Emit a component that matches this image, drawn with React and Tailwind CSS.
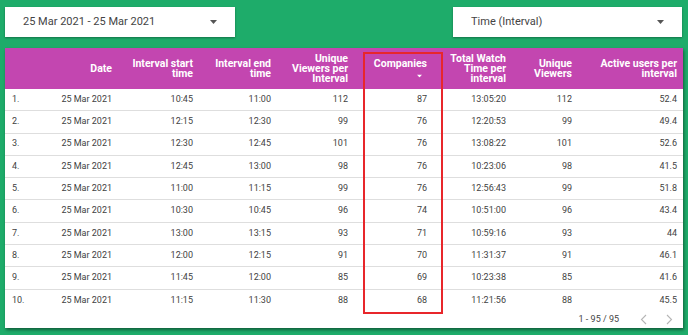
import React from 'react';

const rows = [
    ['1.', '25 Mar 2021', '10:45', '11:00', '112', '87', '13:05:20', '112', '52.4'],
    ['2.', '25 Mar 2021', '12:15', '12:30', '99', '76', '12:20:53', '99', '49.4'],
    ['3.', '25 Mar 2021', '12:30', '12:45', '101', '76', '13:08:22', '101', '52.6'],
    ['4.', '25 Mar 2021', '12:45', '13:00', '98', '76', '10:23:06', '98', '41.5'],
    ['5.', '25 Mar 2021', '11:00', '11:15', '99', '76', '12:56:43', '99', '51.8'],
    ['6.', '25 Mar 2021', '10:30', '10:45', '96', '74', '10:51:00', '96', '43.4'],
    ['7.', '25 Mar 2021', '13:00', '13:15', '93', '71', '10:59:16', '93', '44'],
    ['8.', '25 Mar 2021', '12:00', '12:15', '91', '70', '11:31:37', '91', '46.1'],
    ['9.', '25 Mar 2021', '11:45', '12:00', '85', '69', '10:23:38', '85', '41.6'],
    ['10.', '25 Mar 2021', '11:15', '11:30', '88', '68', '11:21:56', '88', '45.5'],
];

const headers = [
    '',
    'Date',
    'Interval start time',
    'Interval end time',
    'Unique Viewers per Interval',
    'Companies',
    'Total Watch Time per interval',
    'Unique Viewers',
    'Active users per interval',
];

const grid = 'grid grid-cols-[35px_78px_81px_78px_77px_79px_79px_66px_105px]';

const Caret = ({ className }) => (
    <svg width="7" height="4" viewBox="0 0 7 4" className={className}>
        <path d="M0 0h7L3.5 4z" fill="currentColor" />
    </svg>
);

const Chevron = ({ dir }) => (
    <svg width="7" height="11" viewBox="0 0 7 11" className="text-[#b5b5b5]">
        <path
            d={dir === 'left' ? 'M6 1L1.5 5.5L6 10' : 'M1 1l4.5 4.5L1 10'}
            fill="none"
            stroke="currentColor"
            strokeWidth="1.1"
        />
    </svg>
);

const Dropdown = ({ label, width }) => (
    <div className={`${width} h-[30px] bg-white flex items-center justify-between pl-[18px] pr-[18px] shadow-[0_1px_2px_rgba(0,0,0,0.35)]`}>
        <span className="text-[11px] text-[#444]">{label}</span>
        <Caret className="text-[#555]" />
    </div>
);

export default function App() {
    return (
        <div className="w-[688px] h-[335px] bg-[#1eac6a] overflow-hidden" style={{ fontFamily: 'Roboto, "Liberation Sans", sans-serif' }}>
            {/* Filters */}
            <div className="flex justify-between pl-[5px] pr-[6px] pt-[7px]">
                <Dropdown label="25 Mar 2021 - 25 Mar 2021" width="w-[230px]" />
                <Dropdown label="Time (Interval)" width="w-[229px]" />
            </div>

            {/* Table */}
            <div className="relative ml-[5px] mt-[11px] w-[678px] bg-white shadow-[1px_2px_3px_rgba(0,0,0,0.45)]">
                <div className={`${grid} h-[41px] bg-[#c346b0] text-white font-bold text-[10.5px] leading-[10px]`}>
                    {headers.map((h, i) =>
                        i === 5 ? (
                            <div key={i} className="flex flex-col items-end justify-center pr-[6px] gap-[5px]">
                                <span>{h}</span>
                                <Caret className="mr-[4px] scale-75" />
                            </div>
                        ) : (
                            <div key={i} className="flex items-center justify-end text-right pr-[6px]">
                                {h}
                            </div>
                        )
                    )}
                </div>

                {rows.map((r, ri) => (
                    <div
                        key={ri}
                        className={`${grid} h-[22.3px] text-[9px] text-[#3f3f3f] ${ri < rows.length - 1 ? 'border-b border-[#dedede]' : ''}`}
                    >
                        {r.map((c, ci) => (
                            <div key={ci} className={`flex items-center ${ci === 0 ? 'pl-[7px]' : 'justify-end pr-[6px]'}`}>
                                {c}
                            </div>
                        ))}
                    </div>
                ))}

                {/* Pagination */}
                <div className="flex items-center justify-end h-[16px] pr-[10px] text-[9px] text-[#444]">
                    <span className="mr-[21px]">1 - 95 / 95</span>
                    <Chevron dir="left" />
                    <span className="w-[19px]" />
                    <Chevron dir="right" />
                </div>

                {/* Highlight annotation */}
                <div className="absolute left-[358px] top-[4px] w-[80px] h-[262px] border-2 border-[#e8262b] pointer-events-none" />
            </div>
        </div>
    );
}
